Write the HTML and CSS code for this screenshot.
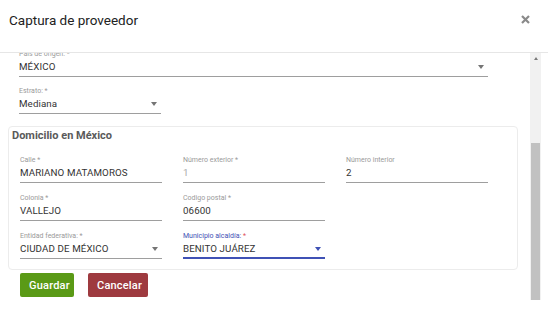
FILE: index.html
```html
<!DOCTYPE html>
<html lang="es">
<head>
<meta charset="utf-8">
<title>Captura de proveedor</title>
<link rel="stylesheet" href="styles.css">
</head>
<body>
<div class="modal">
  <header class="modal-header">
    <h1 class="modal-title">Captura de proveedor</h1>
    <button class="close" aria-label="Cerrar">
      <svg width="9" height="9" viewBox="0 0 9 9"><path d="M1 1 L8 8 M8 1 L1 8" stroke="#8a8a8a" stroke-width="2.2" stroke-linecap="butt"/></svg>
    </button>
  </header>
  <div class="modal-body">
    <div class="scroll-content">
      <div class="form">
        <div class="field field-full select">
          <div class="label">País de origen: *</div>
          <div class="value">MÉXICO</div>
          <span class="caret"></span>
        </div>
        <div class="field field-third select">
          <div class="label">Estrato: *</div>
          <div class="value">Mediana</div>
          <span class="caret"></span>
        </div>
        <fieldset class="group">
          <div class="group-title">Domicilio en México</div>
          <div class="grid">
            <div class="field">
              <div class="label">Calle *</div>
              <div class="value">MARIANO MATAMOROS</div>
            </div>
            <div class="field">
              <div class="label">Número exterior *</div>
              <div class="value muted">1</div>
            </div>
            <div class="field">
              <div class="label">Número interior</div>
              <div class="value">2</div>
            </div>
            <div class="field">
              <div class="label">Colonia *</div>
              <div class="value">VALLEJO</div>
            </div>
            <div class="field">
              <div class="label">Codigo postal *</div>
              <div class="value">06600</div>
            </div>
            <div class="spacer"></div>
            <div class="field select">
              <div class="label">Entidad federativa: *</div>
              <div class="value">CIUDAD DE MÉXICO</div>
              <span class="caret"></span>
            </div>
            <div class="field select focused">
              <div class="label">Municipio alcaldía: <span class="req">*</span></div>
              <div class="value">BENITO JUÁREZ</div>
              <span class="caret"></span>
            </div>
          </div>
        </fieldset>
        <div class="actions">
          <button class="btn btn-save">Guardar</button>
          <button class="btn btn-cancel">Cancelar</button>
        </div>
      </div>
    </div>
    <div class="scrollbar">
      <span class="sb-arrow"></span>
      <div class="sb-thumb"></div>
    </div>
  </div>
</div>
</body>
</html>
```
FILE: styles.css
```css
* { box-sizing: border-box; }
html, body { margin: 0; padding: 0; background: #fff; }
body {
  font-family: Roboto, "Noto Sans", "Liberation Sans", sans-serif;
  color: #333;
  width: 548px;
  height: 314px;
  overflow: hidden;
}
.modal { width: 548px; }
.modal-header {
  height: 53px;
  border-bottom: 1px solid #e6e6e6;
  display: flex;
  align-items: center;
  justify-content: space-between;
  padding: 0 18px 12px 9px;
}
.modal-title {
  margin: 0;
  font-size: 13.5px;
  font-weight: 400;
  color: #222;
}
.close {
  border: 0;
  background: none;
  padding: 0;
  margin-bottom: 2px;
  display: flex;
}
.modal-body {
  display: flex;
  height: 247px;
}
.scroll-content {
  width: 530px;
  overflow: hidden;
}
.form {
  margin-top: -4px;
  padding: 0 12px 0 8px;
}
.field {
  position: relative;
  height: 28px;
  border-bottom: 1px solid #9e9e9e;
}
.field-full { margin: 0 30px 9px 11px; }
.field-third { width: 142px; margin: 0 0 12px 11px; }
.label {
  font-size: 7px;
  line-height: 10px;
  color: #9a9a9a;
  white-space: nowrap;
}
.value {
  font-size: 9.75px;
  line-height: 15px;
  color: #333;
  white-space: nowrap;
  letter-spacing: 0.1px;
}
.value.muted { color: #aaa; }
.caret {
  position: absolute;
  right: 4px;
  top: 16px;
  width: 0;
  height: 0;
  border-left: 3.5px solid transparent;
  border-right: 3.5px solid transparent;
  border-top: 4px solid #757575;
}
.focused { border-bottom: 2px solid #3f51b5; }
.focused .label { color: #3f51b5; }
.focused .caret { border-top-color: #3f51b5; }
.req { color: #e0505a; }
.group {
  margin: 0;
  border: 1px solid #ececec;
  border-radius: 4px;
  padding: 1px 10px 10px 3px;
  min-width: 0;
}
.group-title {
  font-size: 11px;
  line-height: 16px;
  font-weight: 700;
  color: #5a5a5a;
  margin-bottom: 11px;
}
.grid {
  display: grid;
  grid-template-columns: 142px 142px 142px;
  column-gap: 21px;
  row-gap: 10px;
  padding-left: 8px;
}
.actions {
  display: flex;
  gap: 14px;
  padding: 3px 0 0 12px;
}
.btn {
  height: 24px;
  border: 0;
  border-radius: 2px;
  color: #fff;
  font-family: Roboto, "Noto Sans", sans-serif;
  font-size: 11px;
  font-weight: 500;
  padding: 0 9px;
  letter-spacing: 0.2px;
}
.btn-save { background: #5a9a16; width: 54px; }
.btn-cancel { background: #9e3a3f; width: 60px; }
.scrollbar {
  width: 11px;
  background: #f1f1f1;
  display: flex;
  flex-direction: column;
  align-items: center;
}
.sb-arrow {
  margin-top: 4px;
  width: 0;
  height: 0;
  border-left: 2.5px solid transparent;
  border-right: 2.5px solid transparent;
  border-bottom: 3px solid #7a7a7a;
}
.sb-thumb {
  margin-top: 83px;
  width: 9px;
  flex: 1;
  background: #c1c1c1;
}
```
